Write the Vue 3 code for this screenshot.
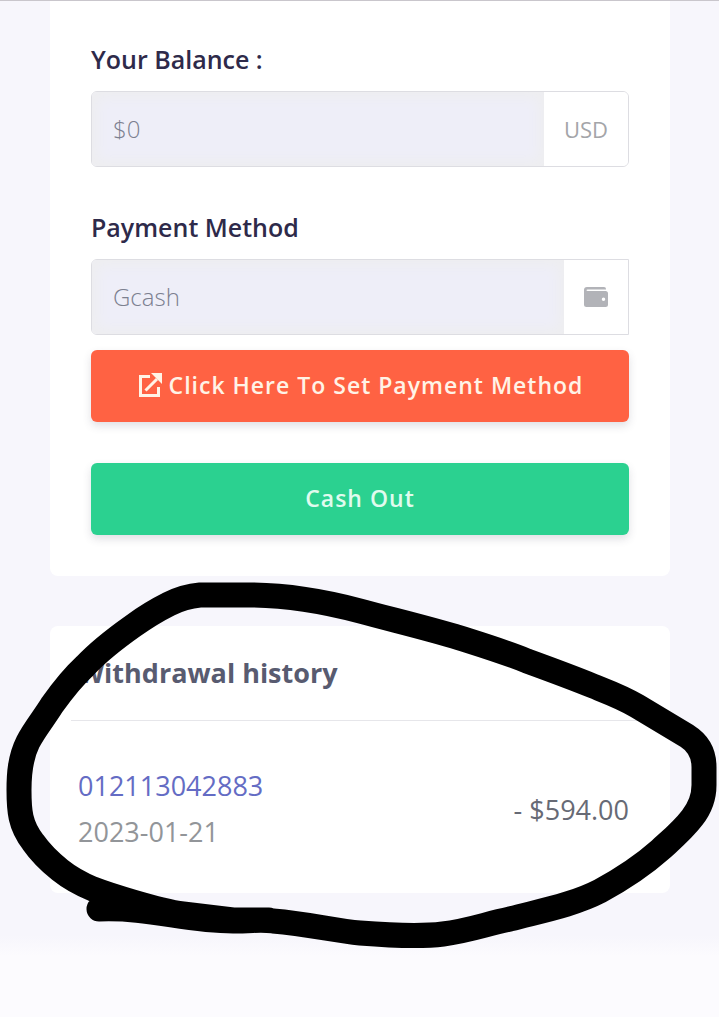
<script setup>
import { ref } from 'vue'

const balance = ref('$0')
const method = ref('Gcash')

const history = [
  { id: '012113042883', date: '2023-01-21', amount: '- $594.00' }
]
</script>

<template>
  <main class="page">
    <form class="card cashout" @submit.prevent>
      <div class="field">
        <label for="balance">Your Balance :</label>
        <div class="input-group">
          <input type="text" id="balance" v-model="balance" readonly />
          <span class="addon currency">USD</span>
        </div>
      </div>

      <div class="field">
        <label for="method">Payment Method</label>
        <div class="input-group square">
          <input type="text" id="method" v-model="method" readonly />
          <span class="addon wallet">
            <svg width="26" height="22" viewBox="0 0 26 22" aria-hidden="true">
              <path
                fill-rule="evenodd"
                d="M4 1H21Q23 1 23 3V3.500H4.500Q3.500 3.500 3.500 4.250T4.500 5H22.500Q25 5 25 7.500V18.500Q25 21 22.500 21H3.500Q1 21 1 18.500V4Q1 1 4 1ZM20.500 11.500A1.700 1.700 0 1 0 20.500 15A1.700 1.700 0 1 0 20.500 11.500Z"
              />
            </svg>
          </span>
        </div>
      </div>

      <button type="button" class="btn btn-method">
        <svg width="26" height="26" viewBox="0 0 26 26" aria-hidden="true">
          <path class="box" d="M13 4.500H3.500V23.500H21.500V15" />
          <path class="box" d="M8.500 18.500L20 7" />
          <path class="head" d="M14 1H25V12Z" />
        </svg>
        <span>Click Here To Set Payment Method</span>
      </button>
      <button type="submit" class="btn btn-cashout">Cash Out</button>
    </form>

    <section class="card history">
      <h2>Withdrawal history</h2>
      <ul>
        <li v-for="item in history" :key="item.id">
          <div>
            <a href="#">{{ item.id }}</a>
            <time :datetime="item.date">{{ item.date }}</time>
          </div>
          <span class="amount">{{ item.amount }}</span>
        </li>
      </ul>
    </section>

    <!-- hand drawn marker around the history -->
    <svg class="marker" viewBox="0 0 719 1017" aria-hidden="true">
      <path
        d="M99 909C150 907 185 921 233 921C255 921 260 919 273 921C310 924 335 931 360 933C385 935 420 937 443 934C468 931 486 924 510 919C540 911 573 905 600 891C622 879 642 866 660 850C672 839 682 831 692 818C700 808 704 797 704 785V767C704 753 698 743 687 736L637 706C622 697 608 692 593 686C571 677 549 669 527 661C505 652 482 645 460 638C427 628 393 620 360 611C326 602 290 595 250 595H200C188 596 179 599 169 604C157 610 144 618 133 626C116 638 100 650 85 666C72 678 62 691 52 705C44 718 34 730 28 742C20 758 19 774 19 790C19 811 20 825 33 842C40 852 50 862 60 870C70 878 81 884 93 889C106 894 119 898 133 902C150 907 167 912 183 914L233 920L269 920"
      />
    </svg>
  </main>
</template>

<style>
body {
  margin: 0;
  background: #f7f6fc;
}
</style>

<style scoped>
* {
  box-sizing: border-box;
}

.page {
  position: relative;
  display: flex;
  flex-direction: column;
  gap: 50px;
  min-height: 100vh;
  padding: 0 49px 0 50px;
  border-top: 1px solid #c9c6cc;
  background: linear-gradient(#f7f6fc 92%, #fcfbfe 94%);
  font-family: 'Open Sans', 'Noto Sans', sans-serif;
}

.card {
  border-radius: 8px;
  background: #fff;
}

.cashout {
  display: flex;
  flex-direction: column;
  padding: 39px 41px 41px;
  border-radius: 0 0 8px 8px;
}

.field {
  display: flex;
  flex-direction: column;
  gap: 13px;
  margin-bottom: 41px;
}

.field + .field {
  margin-bottom: 15px;
}

label {
  color: #2e2a4a;
  font-size: 25px;
  font-weight: 600;
  line-height: 38px;
}

.input-group {
  display: flex;
  height: 76px;
  overflow: hidden;
  border: 1px solid #dddde2;
  border-radius: 6px;
}

.input-group.square {
  border-radius: 6px 0 0 6px;
}

input {
  flex: 1;
  min-width: 0;
  padding: 0 21px 2px;
  border: 0;
  outline: 0;
  background: #eeeef8;
  box-shadow: inset 0 0 12px 6px #eeeef0;
  color: #7c8090;
  font-family: inherit;
  font-size: 24px;
  font-weight: 300;
}

.addon {
  display: flex;
  align-items: center;
  justify-content: center;
  background: #fff;
  color: #a4a5a9;
  font-size: 22px;
}

.currency {
  width: 84px;
}

.wallet {
  width: 64px;
}

.wallet svg {
  fill: #b2b3b8;
}

.btn {
  display: flex;
  align-items: center;
  justify-content: center;
  gap: 6px;
  height: 72px;
  padding: 0 20px 3px;
  border: 0;
  border-radius: 6px;
  box-shadow: 0 4px 8px rgba(60, 60, 90, 0.16);
  color: #fff;
  font-family: inherit;
  font-size: 23px;
  font-weight: 600;
  letter-spacing: 1px;
  cursor: pointer;
}

.btn-method {
  margin-bottom: 41px;
  background: #ff6243;
  color: #fff3e6;
}

.btn-cashout {
  background: #2bd190;
  color: #e0fbee;
}

.box {
  fill: none;
  stroke: #fff3e6;
  stroke-width: 3;
}

.head {
  fill: #fff3e6;
}

.history {
  padding: 0 21px;
}

h2 {
  margin: 0;
  padding: 27px 7px;
  border-bottom: 1px solid #e6e6ea;
  color: #585b70;
  font-size: 27px;
  font-weight: 700;
  line-height: 40px;
}

ul {
  margin: 0;
  padding: 0;
  list-style: none;
}

li {
  display: flex;
  align-items: center;
  justify-content: space-between;
  padding: 42px 20px 38px 7px;
}

a,
time {
  display: block;
  font-size: 27px;
  line-height: 46px;
}

a {
  color: #646cc4;
  text-decoration: none;
}

time {
  color: #929599;
}

.amount {
  color: #676a75;
  font-size: 27px;
}

.marker {
  position: absolute;
  top: -1px;
  left: 0;
  width: 100%;
  pointer-events: none;
}

.marker path {
  fill: none;
  stroke: #000;
  stroke-width: 25;
  stroke-linecap: round;
  stroke-linejoin: round;
}
</style>
